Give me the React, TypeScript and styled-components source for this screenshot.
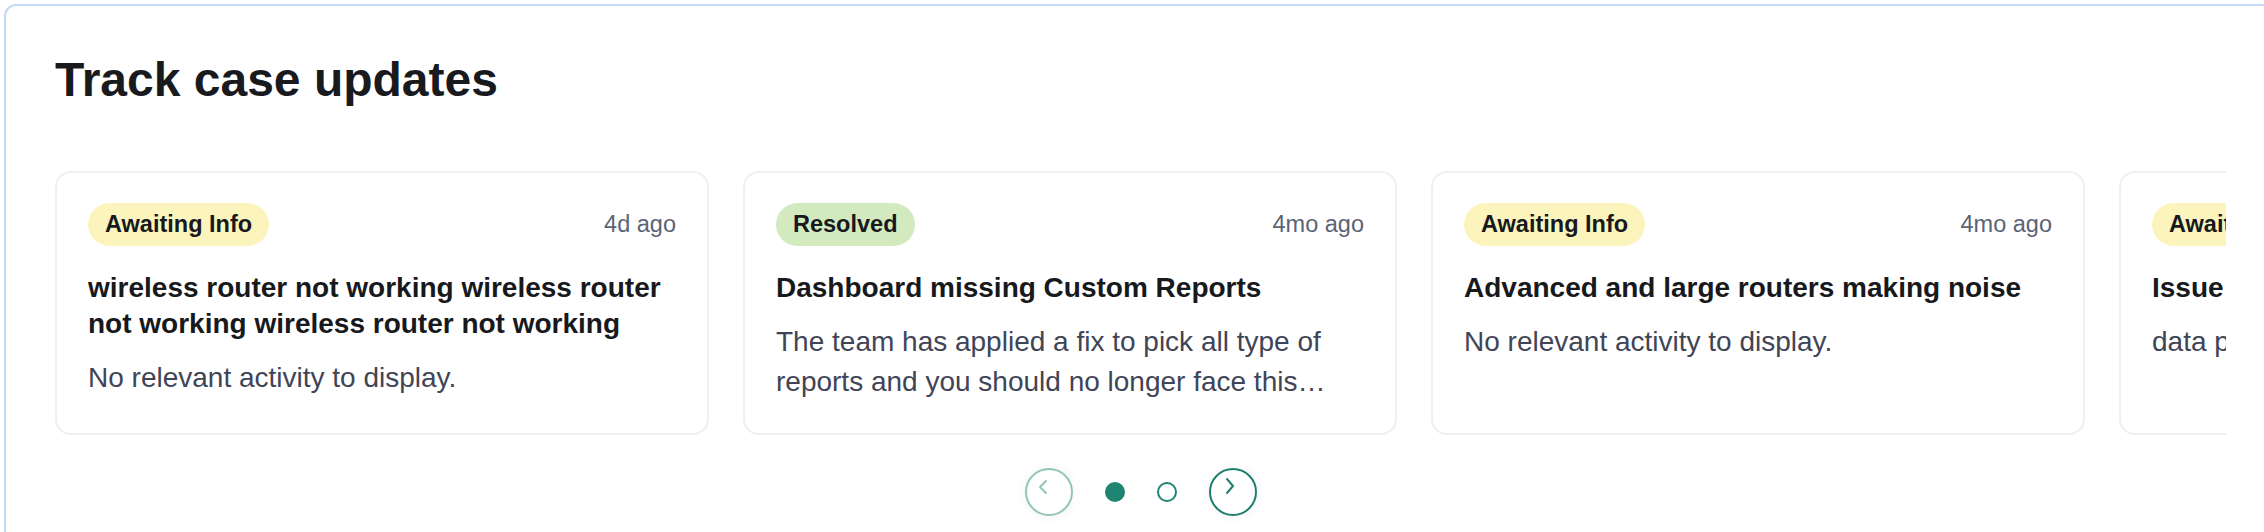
import React from "react";
import styled, { createGlobalStyle } from "styled-components";

const GlobalStyle = createGlobalStyle`
  html, body {
    margin: 0;
    padding: 0;
    background: #ffffff;
    overflow: hidden;
  }
  body {
    font-family: "Liberation Sans", Arial, Helvetica, sans-serif;
  }
  * { box-sizing: border-box; }
`;

const Panel = styled.section`
  margin: 4px 0 0 4px;
  width: 2273px;
  height: 560px;
  border: 2px solid #c2daf6;
  border-radius: 12px;
  background: #ffffff;
  padding: 46px 49px 0 49px;
`;

const Heading = styled.h2`
  margin: 0;
  font-size: 48px;
  line-height: 56px;
  font-weight: 700;
  color: #181a1e;
`;

const Viewport = styled.div`
  margin-top: 63px;
  overflow: hidden;
`;

const Track = styled.div`
  display: flex;
  gap: 34px;
  align-items: stretch;
`;

const Card = styled.article`
  flex: 0 0 654px;
  width: 654px;
  border: 2px solid #efeff1;
  border-radius: 16px;
  background: #ffffff;
  padding: 30px 31px 31px 31px;
  display: flex;
  flex-direction: column;
`;

const CardHead = styled.div`
  display: flex;
  align-items: center;
  justify-content: space-between;
`;

const Badge = styled.span<{ $tone: "waiting" | "resolved" }>`
  display: inline-flex;
  align-items: center;
  height: 43px;
  padding: 0 17px;
  border-radius: 22px;
  font-size: 23.5px;
  font-weight: 700;
  color: #17191c;
  background: ${(p) => (p.$tone === "resolved" ? "#d3eabf" : "#fbf5bd")};
  white-space: nowrap;
`;

const Time = styled.span`
  font-size: 23.5px;
  color: #5b6477;
  white-space: nowrap;
`;

const CardTitle = styled.h3`
  margin: 24px 0 0 0;
  font-size: 28px;
  line-height: 36px;
  font-weight: 700;
  color: #17191c;
`;

const CardBody = styled.p`
  margin: 16px 0 0 0;
  font-size: 28px;
  line-height: 40px;
  color: #3f4556;
  display: -webkit-box;
  -webkit-line-clamp: 2;
  -webkit-box-orient: vertical;
  overflow: hidden;
`;

const Pager = styled.div`
  margin-top: 33px;
  display: flex;
  justify-content: center;
  align-items: center;
  gap: 32px;
`;

const ArrowButton = styled.button<{ $disabled?: boolean }>`
  width: 48px;
  height: 48px;
  border-radius: 50%;
  border: 2px solid ${(p) => (p.$disabled ? "#93c6bb" : "#1e7f6d")};
  background: #ffffff;
  box-shadow: 0 0 14px rgba(0, 0, 0, 0.05);
  display: flex;
  align-items: center;
  justify-content: center;
  padding: 0;
  cursor: ${(p) => (p.$disabled ? "default" : "pointer")};
  color: ${(p) => (p.$disabled ? "#93c6bb" : "#1e7f6d")};
`;

const ArrowIcon = styled.svg<{ $dx: number; $dy: number }>`
  width: 12px;
  height: 18px;
  transform: translate(${(p) => p.$dx}px, ${(p) => p.$dy}px);
`;

const Dot = styled.span<{ $active?: boolean }>`
  width: 20px;
  height: 20px;
  border-radius: 50%;
  border: 2px solid #1f8572;
  background: ${(p) => (p.$active ? "#1f8572" : "#ffffff")};
`;

type Item = {
  status: "waiting" | "resolved";
  label: string;
  time: string;
  title: string;
  body: string;
};

const items: Item[] = [
  {
    status: "waiting",
    label: "Awaiting Info",
    time: "4d ago",
    title:
      "wireless router not working wireless router not working wireless router not working",
    body: "No relevant activity to display.",
  },
  {
    status: "resolved",
    label: "Resolved",
    time: "4mo ago",
    title: "Dashboard missing Custom Reports",
    body:
      "The team has applied a fix to pick all type of reports and you should no longer face this issue going forward.",
  },
  {
    status: "waiting",
    label: "Awaiting Info",
    time: "4mo ago",
    title: "Advanced and large routers making noise",
    body: "No relevant activity to display.",
  },
  {
    status: "waiting",
    label: "Awaiting Info",
    time: "5mo ago",
    title: "Issue with data export",
    body: "data pipeline is being reviewed by the team.",
  },
];

export default function App() {
  return (
    <>
      <GlobalStyle />
      <Panel>
        <Heading>Track case updates</Heading>
        <Viewport>
          <Track>
            {items.map((it, i) => (
              <Card key={i}>
                <CardHead>
                  <Badge $tone={it.status}>{it.label}</Badge>
                  <Time>{it.time}</Time>
                </CardHead>
                <CardTitle>{it.title}</CardTitle>
                <CardBody>{it.body}</CardBody>
              </Card>
            ))}
          </Track>
        </Viewport>
        <Pager>
          <ArrowButton $disabled aria-label="Previous">
            <ArrowIcon viewBox="0 0 12 18" $dx={-6} $dy={-5} fill="none">
              <polyline
                points="9,3 3,9 9,15"
                stroke="currentColor"
                strokeWidth="2"
                strokeLinecap="round"
                strokeLinejoin="round"
              />
            </ArrowIcon>
          </ArrowButton>
          <Dot $active />
          <Dot />
          <ArrowButton aria-label="Next">
            <ArrowIcon viewBox="0 0 12 18" $dx={-3} $dy={-6} fill="none">
              <polyline
                points="3,2 9,9 3,16"
                stroke="currentColor"
                strokeWidth="2"
                strokeLinecap="round"
                strokeLinejoin="round"
              />
            </ArrowIcon>
          </ArrowButton>
        </Pager>
      </Panel>
    </>
  );
}
